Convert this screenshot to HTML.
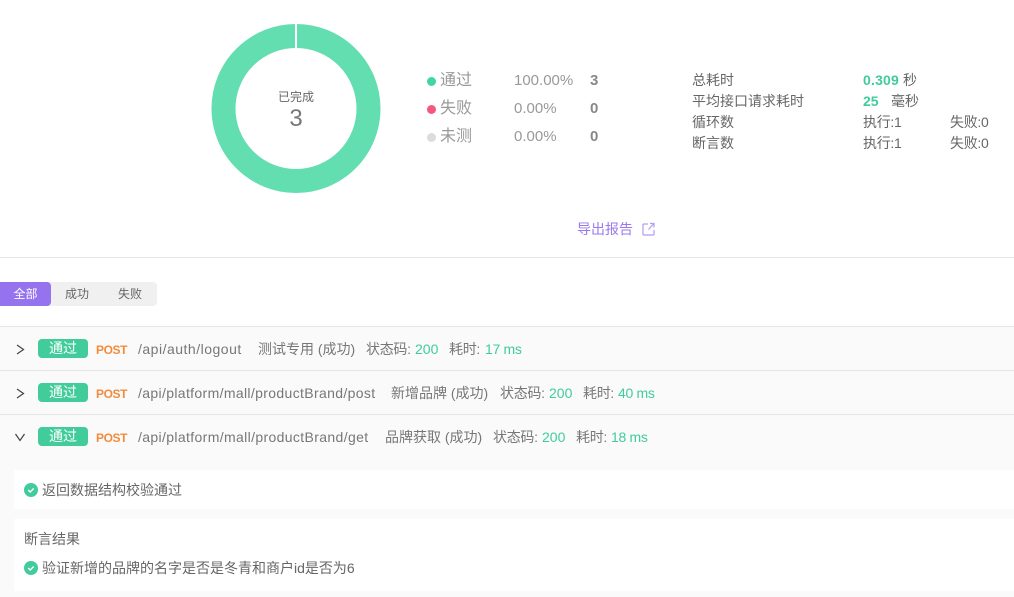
<!DOCTYPE html>
<html><head><meta charset="utf-8"><style>
html,body{margin:0;padding:0;background:#fff}
#p{position:relative;width:1014px;height:597px;overflow:hidden;background:#fff;font-family:"Liberation Sans","Noto Sans CJK SC",sans-serif;font-size:14px;color:#666}
#p div{position:absolute;white-space:nowrap}
.t{line-height:18px;height:18px}
.g{color:#40cc9b}
.b{font-weight:bold}
.post{color:#f28c3c;font-weight:bold;font-size:12px;letter-spacing:-.4px}
.tag{left:38px;width:50px;height:19px;line-height:19px;background:#42cb9b;border-radius:4px;color:#fff;text-align:center;font-size:14px}
.line{left:0;width:1014px;height:1px;background:#e6e6e6}
.l{font-size:16px;color:#999;line-height:22px}
.dot{width:9px;height:9px;border-radius:50%}
.u{color:#777}
.n{letter-spacing:-.3px}
</style></head><body><div id="p">
<svg style="position:absolute;left:0;top:0" width="1014" height="260">
<circle cx="296" cy="108.5" r="72.5" fill="none" stroke="#63deb0" stroke-width="24"/>
<rect x="295" y="22" width="2" height="26" fill="#fff"/>
<g fill="none" stroke="#b39cf3" stroke-width="1.2"><path d="M648 224h-4a1 1 0 0 0-1 1v9a1 1 0 0 0 1 1h9a1 1 0 0 0 1-1v-4"/><path d="M648.500 229.500l5-5.500M650 223.500h4v4"/></g>
</svg>
<div class="t" style="left:278px;top:88px;width:36px;font-size:12px;text-align:center">已完成</div>
<div style="left:276px;top:105px;width:40px;text-align:center;font-size:24px;line-height:28px;color:#777;font-weight:300">3</div>

<div class="dot" style="left:427px;top:77px;background:#40d6a0"></div>
<div class="dot" style="left:427px;top:105px;background:#f5577f"></div>
<div class="dot" style="left:427px;top:133px;background:#dcdcdc"></div>
<div class="l" style="left:440px;top:70px">通过</div>
<div class="l" style="left:440px;top:98px">失败</div>
<div class="l" style="left:440px;top:126px">未测</div>
<div class="l" style="left:514px;top:70px;font-size:15px">100.00%</div>
<div class="l" style="left:514px;top:98px;font-size:15px">0.00%</div>
<div class="l" style="left:514px;top:126px;font-size:15px">0.00%</div>
<div class="l b" style="left:590px;top:70px;font-size:15px;color:#888">3</div>
<div class="l b" style="left:590px;top:98px;font-size:15px;color:#888">0</div>
<div class="l b" style="left:590px;top:126px;font-size:15px;color:#888">0</div>

<div class="t" style="left:692px;top:71px">总耗时</div>
<div class="t" style="left:692px;top:92px">平均接口请求耗时</div>
<div class="t" style="left:692px;top:113px">循环数</div>
<div class="t" style="left:692px;top:134px">断言数</div>
<div class="t g b" style="left:863px;top:71px;letter-spacing:.2px">0.309</div>
<div class="t" style="left:903px;top:71px">秒</div>
<div class="t g b" style="left:863px;top:92px">25</div>
<div class="t" style="left:891px;top:92px">毫秒</div>
<div class="t n" style="left:863px;top:113px">执行:1</div>
<div class="t n" style="left:950px;top:113px">失败:0</div>
<div class="t n" style="left:863px;top:134px">执行:1</div>
<div class="t n" style="left:950px;top:134px">失败:0</div>

<div class="t" style="left:577px;top:220px;color:#9b78ee">导出报告</div>
<div class="line" style="top:257px"></div>

<div style="left:0;top:282px;width:157px;height:24px;background:#f0f0f0;border-radius:0 4px 4px 0"></div>
<div style="left:0;top:282px;width:51px;height:24px;line-height:24px;background:#9673ee;border-radius:0 4px 4px 0;color:#fff;text-align:center;font-size:12px">全部</div>
<div style="left:65px;top:282px;line-height:24px;font-size:12px">成功</div>
<div style="left:118px;top:282px;line-height:24px;font-size:12px">失败</div>

<div style="left:0;top:326px;width:1014px;height:271px;background:#fafafa"></div>
<div class="line" style="top:326px"></div>
<div class="line" style="top:370px"></div>
<div class="line" style="top:414px"></div>

<svg style="position:absolute;left:0;top:326px" width="30" height="130" fill="none" stroke="#444" stroke-width="1.2">
<path d="M17 19l6.500 4.500-6.500 4.500"/><path d="M17 63l6.500 4.500-6.500 4.500"/><path d="M15.500 108l4.500 6.500 4.500-6.500"/>
</svg>

<div class="tag" style="top:339px">通过</div>
<div class="tag" style="top:383px">通过</div>
<div class="tag" style="top:427px">通过</div>
<div class="t post" style="left:96px;top:341px">POST</div>
<div class="t post" style="left:96px;top:385px">POST</div>
<div class="t post" style="left:96px;top:429px">POST</div>

<div class="t u" style="left:138px;top:340px;letter-spacing:.5px">/api/auth/logout</div>
<div class="t u" style="left:258px;top:340px">测试专用 (成功)</div>
<div class="t u n" style="left:366px;top:340px">状态码:</div>
<div class="t g" style="left:415px;top:340px">200</div>
<div class="t u n" style="left:449px;top:340px">耗时:</div>
<div class="t g n" style="left:485px;top:340px">17 ms</div>

<div class="t u" style="left:138px;top:384px;letter-spacing:.35px">/api/platform/mall/productBrand/post</div>
<div class="t u" style="left:391px;top:384px">新增品牌 (成功)</div>
<div class="t u n" style="left:500px;top:384px">状态码:</div>
<div class="t g" style="left:549px;top:384px">200</div>
<div class="t u n" style="left:583px;top:384px">耗时:</div>
<div class="t g n" style="left:618px;top:384px">40 ms</div>

<div class="t u" style="left:138px;top:428px;letter-spacing:.36px">/api/platform/mall/productBrand/get</div>
<div class="t u" style="left:385px;top:428px">品牌获取 (成功)</div>
<div class="t u n" style="left:493px;top:428px">状态码:</div>
<div class="t g" style="left:542px;top:428px">200</div>
<div class="t u n" style="left:576px;top:428px">耗时:</div>
<div class="t g n" style="left:611px;top:428px">18 ms</div>

<div style="left:14px;top:470px;width:1000px;height:39px;background:#fff"></div>
<div style="left:14px;top:519px;width:1000px;height:72px;background:#fff"></div>
<svg style="position:absolute;left:24px;top:483px" width="14" height="14"><circle cx="7" cy="7" r="7" fill="#42cb9b"/><path d="M4.200 7l2 2 3.500-3.500" fill="none" stroke="#fff" stroke-width="1.400"/></svg>
<svg style="position:absolute;left:24px;top:561px" width="14" height="14"><circle cx="7" cy="7" r="7" fill="#42cb9b"/><path d="M4.200 7l2 2 3.500-3.500" fill="none" stroke="#fff" stroke-width="1.400"/></svg>
<div class="t" style="left:42px;top:481px">返回数据结构校验通过</div>
<div class="t" style="left:24px;top:530px">断言结果</div>
<div class="t" style="left:42px;top:559px">验证新增的品牌的名字是否是冬青和商户id是否为6</div>
</div></body></html>
